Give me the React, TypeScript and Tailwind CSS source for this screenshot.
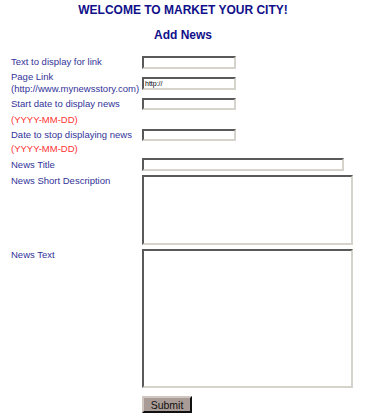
import React from 'react';

const field =
  'box-border border-2 border-t-[#5a5a5a] border-l-[#5a5a5a] border-b-[#d6d2cc] border-r-[#d6d2cc] bg-white';

const Label = ({ children, red }: { children: React.ReactNode; red?: boolean }) => (
  <div className={`w-[131px] shrink-0 text-[9.5px] leading-[12px] ${red ? 'text-[#ff3333]' : 'text-[#33339a]'}`}>
    {children}
  </div>
);

const App = () => {
  return (
    <div className="w-[366px] h-[420px] bg-white font-['Liberation_Sans',Arial,sans-serif] overflow-hidden">
      {/* Headings */}
      <div className="pt-[3px] text-center text-[12px] leading-[14px] font-bold text-[#10108a]">
        WELCOME TO MARKET YOUR CITY!
      </div>
      <div className="mt-[11px] text-center text-[12px] leading-[14px] font-bold text-[#10108a]">Add News</div>

      {/* Form rows */}
      <div className="mt-[12px] pl-[11px]">
        <div className="flex items-center h-[16px]">
          <Label>Text to display for link</Label>
          <div className={`${field} w-[94px] h-[13px]`} />
        </div>

        <div className="flex items-center h-[26px]">
          <Label>
            Page Link
            <br />
            (http://www.mynewsstory.com)
          </Label>
          <div className={`${field} w-[94px] h-[13px] pl-[1px] text-[7px] leading-[9px] text-black`}>http://</div>
        </div>

        <div className="flex items-center h-[16px]">
          <Label>Start date to display news</Label>
          <div className={`${field} w-[94px] h-[12px]`} />
        </div>

        <div className="flex items-center h-[15px]">
          <Label red>(YYYY-MM-DD)</Label>
        </div>

        <div className="flex items-center h-[16px]">
          <Label>Date to stop displaying news</Label>
          <div className={`${field} w-[94px] h-[12px]`} />
        </div>

        <div className="flex items-center h-[12px]">
          <Label red>(YYYY-MM-DD)</Label>
        </div>

        <div className="flex items-center h-[19px]">
          <Label>News Title</Label>
          <div className={`${field} w-[202px] h-[13px]`} />
        </div>

        <div className="flex items-start py-[1px]">
          <Label>News Short Description</Label>
          <div className={`${field} w-[211px] h-[70px]`} />
        </div>

        <div className="flex items-start pt-[3px] pb-[8px]">
          <Label>News Text</Label>
          <div className={`${field} w-[211px] h-[139px]`} />
        </div>

        <div className="flex">
          <div className="w-[131px] shrink-0" />
          <button className="box-border w-[50px] h-[17px] bg-[#a99b95] border-2 border-t-[#cfc6c2] border-l-[#cfc6c2] border-b-[#111] border-r-[#111] text-[10.5px] leading-[12px] text-[#111] p-0">
            Submit
          </button>
        </div>
      </div>
    </div>
  );
};

export default App;
